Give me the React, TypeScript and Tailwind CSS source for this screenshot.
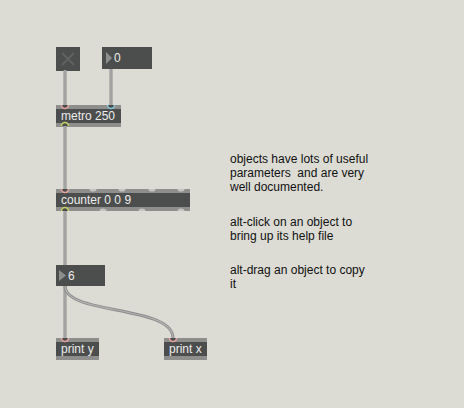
import React from "react";

const strip = "h-[4px] bg-[#8e8f8d]";

const Obj = ({ pos, children }: { pos: string; children: React.ReactNode }) => (
  <div className={`absolute h-[22px] flex flex-col bg-[#4b4e4c] ${pos}`}>
    <div className={strip} />
    <div className="flex-1 flex items-center pl-[5px] text-[12px] leading-[14px] text-[#ececec] whitespace-nowrap">
      {children}
    </div>
    <div className={strip} />
  </div>
);

const cords = [
  "M65,70 L65,105",
  "M111,69 L111,105",
  "M65,126 L65,189",
  "M65,211 L65,265",
  "M65,286 L65,338",
  "M65,286 C65,315 173,305 173,338",
];

// inlet ∪ at top edge, outlet ∩ at bottom edge
const Inlet = ({ x, y, c }: { x: number; y: number; c: string }) => (
  <path d={`M${x - 3.5},${y} A3.5,3.5 0 0 0 ${x + 3.5},${y}`} stroke={c} strokeWidth="1.5" fill="#4b4e4c" />
);
const Outlet = ({ x, y, c }: { x: number; y: number; c: string }) => (
  <path d={`M${x - 3.5},${y} A3.5,3.5 0 0 1 ${x + 3.5},${y}`} stroke={c} strokeWidth="1.5" fill="#4b4e4c" />
);
const Bump = ({ x, y, up }: { x: number; y: number; up?: boolean }) => (
  <path d={`M${x - 3.5},${y} A3.5,2.6 0 0 ${up ? 1 : 0} ${x + 3.5},${y} Z`} fill="#c4c5c3" />
);

export default function App() {
  return (
    <div className="relative w-[464px] h-[408px] overflow-hidden bg-[#dcdcd5] font-['Liberation_Sans',Arial,sans-serif]">
      {/* toggle */}
      <div className="absolute left-[56px] top-[47px] w-[24px] h-[24px] bg-[#4b4e4c] flex items-center justify-center">
        <svg width="14" height="14" viewBox="0 0 14 14">
          <path d="M1,1 L13,13 M13,1 L1,13" stroke="#5f6260" strokeWidth="2" />
        </svg>
      </div>

      {/* number box 0 */}
      <div className="absolute left-[102px] top-[47px] w-[50px] h-[22px] bg-[#4b4e4c] flex items-center pl-[4px] gap-[2px] text-[12px] leading-[14px] text-[#ececec]">
        <svg width="6" height="12" viewBox="0 0 6 12">
          <path d="M0,0 L6,6 L0,12 Z" fill="#8e8f8d" />
        </svg>
        <span>0</span>
      </div>

      <Obj pos="left-[56px] top-[105px] w-[65px]">metro 250</Obj>
      <Obj pos="left-[56px] top-[189px] w-[134px]">counter 0 0 9</Obj>

      {/* number box 6 */}
      <div className="absolute left-[56px] top-[265px] w-[49px] h-[21px] bg-[#4b4e4c] flex items-center pl-[3px] gap-[2px] text-[12px] leading-[14px] text-[#ececec]">
        <svg width="7" height="11" viewBox="0 0 7 11">
          <path d="M0,0 L7,5.5 L0,11 Z" fill="#8e8f8d" />
        </svg>
        <span>6</span>
      </div>

      <Obj pos="left-[56px] top-[338px] w-[43px]">print y</Obj>
      <Obj pos="left-[164px] top-[338px] w-[43px]">print x</Obj>

      <svg className="absolute inset-0 pointer-events-none" width="464" height="408">
        {cords.map((d) => (
          <g key={d} fill="none">
            <path d={d} stroke="#8c8c8c" strokeWidth="3" />
            <path d={d} stroke="#b2b2b2" strokeWidth="1.2" />
          </g>
        ))}
        <Inlet x={65} y={105} c="#e7a3a0" />
        <Inlet x={111} y={105} c="#86c6dc" />
        <Outlet x={65} y={126} c="#c9d066" />
        <Inlet x={65} y={189} c="#e7a3a0" />
        <Bump x={93} y={189} />
        <Bump x={122} y={189} />
        <Bump x={152} y={189} />
        <Bump x={181} y={189} />
        <Outlet x={65} y={211} c="#c9d066" />
        <Bump x={103} y={211} up />
        <Bump x={142} y={211} up />
        <Bump x={181} y={211} up />
        <Inlet x={65} y={338} c="#e7a3a0" />
        <Inlet x={173} y={338} c="#e7a3a0" />
      </svg>

      <div className="absolute left-[230px] top-[152px] text-[12px] leading-[14px] text-[#111]">
        objects have lots of useful
        <br />
        parameters&nbsp; and are very
        <br />
        well documented.
      </div>
      <div className="absolute left-[230px] top-[215px] text-[12px] leading-[14px] text-[#111]">
        alt-click on an object to
        <br />
        bring up its help file
      </div>
      <div className="absolute left-[230px] top-[263px] text-[12px] leading-[14px] text-[#111]">
        alt-drag an object to copy
        <br />
        it
      </div>
    </div>
  );
}
